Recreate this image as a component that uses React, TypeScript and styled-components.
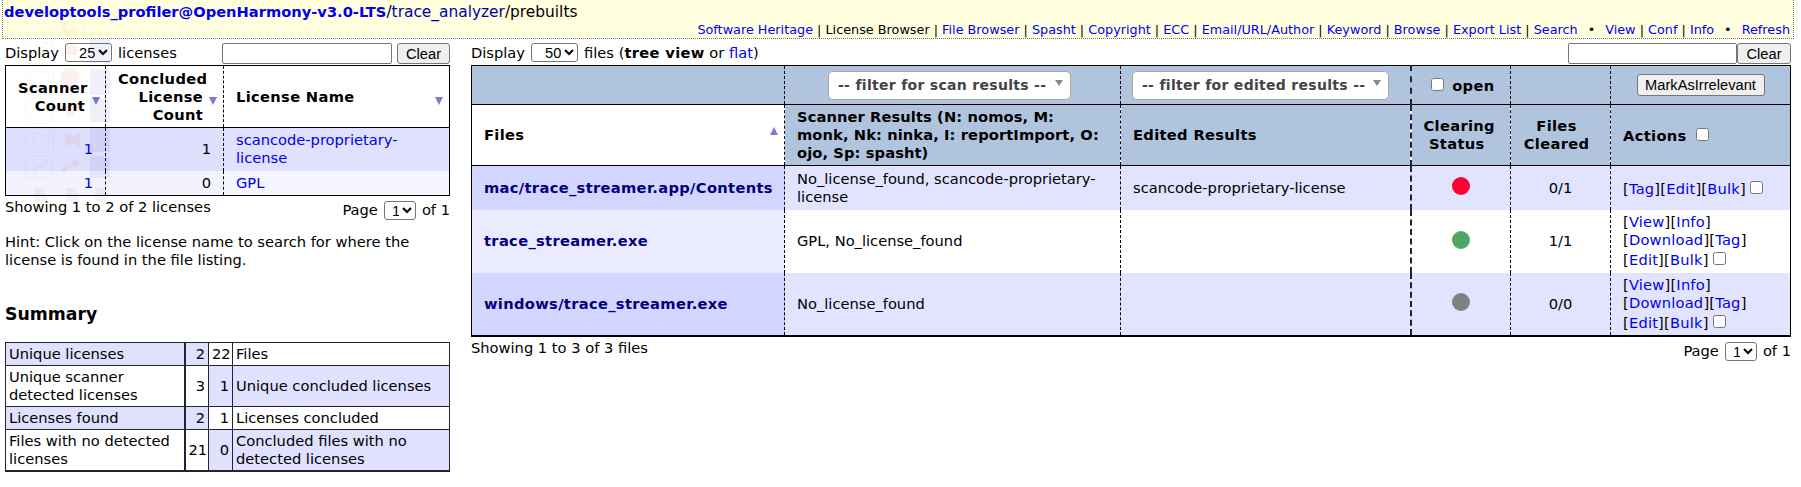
import React from 'react'
import styled, { createGlobalStyle } from 'styled-components'

const GlobalStyle = createGlobalStyle`
  html, body {
    margin: 0;
    padding: 0;
    background: #fff;
  }
  body {
    font-family: "DejaVu Sans", Verdana, sans-serif;
    font-size: 14.67px;
    line-height: 18px;
    color: #000;
    overflow: hidden;
  }
  a {
    color: #0000ee;
    text-decoration: none;
  }
  b {
    letter-spacing: 0.33px;
  }
`

const Page = styled.div`
  position: relative;
  width: 1801px;
  height: 487px;
  overflow: hidden;
`

const Header = styled.div`
  box-sizing: border-box;
  width: 1792px;
  height: 39px;
  margin-left: 2px;
  padding: 0 3px 0 1px;
  background: #ffffe0;
  border: dotted #777;
  border-width: 0 1px 1px 1px;
  display: flex;
  flex-direction: column;
  justify-content: flex-end;
  overflow: hidden;
`

const Breadcrumb = styled.div`
  font-size: 15.4px;
  line-height: 18px;
  margin-bottom: 1px;

  b {
    font-size: 14.67px;
    letter-spacing: 0;
  }
  span {
    color: #000;
  }
  a.plain {
    color: #0000aa;
  }
`

const Nav = styled.div`
  display: flex;
  justify-content: flex-end;
  align-items: center;
  height: 16px;
  font-size: 12.8px;
  line-height: 16px;
  white-space: pre;
`

const NavDot = styled.span`
  margin: 0 10px;
`

const Main = styled.div`
  display: flex;
  margin-top: 4px;
  padding-left: 5px;
`

const LeftColumn = styled.div`
  width: 445px;
  flex: none;
`

const RightColumn = styled.div`
  width: 1320px;
  flex: none;
  margin-left: 21px;
`

const ControlBar = styled.div`
  display: flex;
  justify-content: space-between;
  align-items: flex-start;
  height: 22px;
`

const DisplayLabel = styled.div`
  display: flex;
  align-items: center;
  height: 19px;
  gap: 6px;
`

const SearchGroup = styled.div<{ $gap: number }>`
  display: flex;
  gap: ${(p) => p.$gap}px;
`

const SearchInput = styled.input<{ $width: number }>`
  box-sizing: border-box;
  width: ${(p) => p.$width}px;
  height: 21px;
  border: 1px solid #767676;
  border-radius: 2px;
  background: #fff;
  padding: 1px 2px;
`

const Button = styled.button<{ $width: number; $height: number }>`
  box-sizing: border-box;
  width: ${(p) => p.$width}px;
  height: ${(p) => p.$height}px;
  padding: 0;
  background: #efefef;
  border: 1px solid #767676;
  border-radius: 3px;
  font-family: "Liberation Sans", Arial, sans-serif;
  font-size: 14.67px;
  color: #000;
`

const Select = styled.select<{ $width: number; $inset: number }>`
  box-sizing: border-box;
  width: ${(p) => p.$width}px;
  height: 19px;
  padding: 0 0 0 ${(p) => p.$inset}px;
  background: #fff;
  border: 1px solid #767676;
  border-radius: 3px;
  font-family: "Liberation Sans", Arial, sans-serif;
  font-size: 14.67px;
  color: #000;
`

const DataTable = styled.table<{ $heavyFoot?: boolean }>`
  border-collapse: collapse;
  table-layout: fixed;
  width: 100%;
  border: 1px solid #000;
  border-bottom-width: ${(p) => (p.$heavyFoot ? '2px' : '1px')};
`

const HeadCell = styled.th<{ $align?: string; $blue?: boolean; $thick?: boolean; $tight?: boolean }>`
  position: relative;
  box-sizing: border-box;
  padding: 3px ${(p) => (p.$tight ? '0' : '20px')} 3px 12px;
  text-align: ${(p) => p.$align || 'left'};
  vertical-align: middle;
  font-weight: bold;
  letter-spacing: ${(p) => (p.$tight ? '0.1px' : '0.33px')};
  white-space: ${(p) => (p.$tight ? 'nowrap' : 'normal')};
  background: ${(p) => (p.$blue ? '#b0c4de' : '#fff')};
  border-bottom: 1px solid #000;
  border-left: ${(p) => (p.$thick ? '2px dashed #223' : '1px dashed #000')};

  &:first-child {
    border-left: none;
  }
`

const FilterCell = styled.th<{ $thick?: boolean }>`
  box-sizing: border-box;
  padding: 0;
  height: 39px;
  text-align: center;
  vertical-align: middle;
  background: #b0c4de;
  border-bottom: 1px solid #000;
  border-left: ${(p) => (p.$thick ? '2px dashed #223' : '1px dashed #000')};

  &:first-child {
    border-left: none;
  }
`

const SortArrow = styled.span<{ $up?: boolean; $right: number; $top: number }>`
  position: absolute;
  right: ${(p) => p.$right}px;
  top: ${(p) => p.$top}px;
  width: 0;
  height: 0;
  border-left: 4.5px solid transparent;
  border-right: 4.5px solid transparent;
  ${(p) => (p.$up ? 'border-bottom: 8px solid #7b7bd0;' : 'border-top: 8px solid #7b7bd0;')}
`

const Row = styled.tr<{ $height: number }>`
  height: ${(p) => p.$height}px;
`

const Cell = styled.td<{ $bg?: string; $align?: string; $thick?: boolean }>`
  box-sizing: border-box;
  padding: 3px 12px;
  text-align: ${(p) => p.$align || 'left'};
  vertical-align: middle;
  background: ${(p) => p.$bg || '#fff'};
  border-left: ${(p) => (p.$thick ? '2px dashed #223' : '1px dashed #000')};

  &:first-child {
    border-left: none;
  }
`

const FileLink = styled.a`
  color: #000080;
  font-weight: bold;
  letter-spacing: 0.33px;
`

const Bubble = styled.span<{ $color: string }>`
  display: block;
  width: 18px;
  height: 18px;
  margin: -3px auto 0;
  border-radius: 50%;
  background: ${(p) => p.$color};
`

const Chosen = styled.div<{ $width: number; $left: number }>`
  box-sizing: border-box;
  display: flex;
  align-items: center;
  justify-content: space-between;
  width: ${(p) => p.$width}px;
  height: 29px;
  margin-left: ${(p) => p.$left}px;
  padding: 0 7px 0 9px;
  background: #fff;
  border: 1px solid #aaa;
  border-radius: 5px;
  color: #444;
  font-size: 14px;
  font-weight: bold;
  letter-spacing: 0.3px;
  white-space: nowrap;
`

const ChosenCaret = styled.span`
  width: 0;
  height: 0;
  margin-top: -4px;
  border-left: 4px solid transparent;
  border-right: 4px solid transparent;
  border-top: 6px solid #888;
`

const CheckBox = styled.input.attrs({ type: 'checkbox' })`
  width: 13px;
  height: 13px;
  margin: 3px 3px 3px 4px;
  vertical-align: baseline;
`

const ActionLine = styled.div`
  white-space: nowrap;
  letter-spacing: 0.2px;
`

const FootRow = styled.div`
  display: flex;
  justify-content: space-between;
  align-items: flex-start;
`

const ShowingText = styled.div`
  margin-top: 2px;
`

const Pager = styled.div`
  display: flex;
  align-items: center;
  gap: 6px;
  height: 19px;
  margin-top: 5px;
`

const Hint = styled.p`
  margin: 13px 0 0;
`

const SummaryTitle = styled.h3`
  margin: 35px 0 0;
  font-size: 17.3px;
  line-height: 20px;
  font-weight: bold;
`

const SummaryTable = styled.table`
  border-collapse: collapse;
  table-layout: fixed;
  width: 100%;
  margin-top: 18px;
  border: 1px solid #223;
  border-bottom-width: 2px;
`

const SummaryCell = styled.td<{ $shaded?: boolean; $num?: boolean; $heavy?: boolean }>`
  box-sizing: border-box;
  padding: 2px 3px;
  text-align: ${(p) => (p.$num ? 'right' : 'left')};
  background: ${(p) => (p.$shaded ? '#e0e0ff' : '#fff')};
  border: 1px solid #223;
  border-right-width: ${(p) => (p.$heavy ? '2px' : '1px')};
`

const Watermark = styled.svg`
  position: absolute;
  left: 15px;
  top: 0;
  pointer-events: none;
  opacity: 0.07;
`

const navItems = [
  'Software Heritage',
  'License Browser',
  'File Browser',
  'Spasht',
  'Copyright',
  'ECC',
  'Email/URL/Author',
  'Keyword',
  'Browse',
  'Export List',
  'Search',
]

const files = [
  {
    name: 'mac/trace_streamer.app/Contents',
    scanner: 'No_license_found, scancode-proprietary-license',
    edited: 'scancode-proprietary-license',
    status: '#ff0033',
    cleared: '0/1',
    sorted: '#d3d6ff',
    bg: '#e2e4ff',
    height: 44,
    actions: [['Tag', 'Edit', 'Bulk']],
  },
  {
    name: 'trace_streamer.exe',
    scanner: 'GPL, No_license_found',
    edited: '',
    status: '#4ba967',
    cleared: '1/1',
    sorted: '#eaebff',
    bg: '#fff',
    height: 63,
    actions: [['View', 'Info'], ['Download', 'Tag'], ['Edit', 'Bulk']],
  },
  {
    name: 'windows/trace_streamer.exe',
    scanner: 'No_license_found',
    edited: '',
    status: '#808080',
    cleared: '0/0',
    sorted: '#d3d6ff',
    bg: '#e2e4ff',
    height: 62,
    actions: [['View', 'Info'], ['Download', 'Tag'], ['Edit', 'Bulk']],
  },
]

const summary = [
  { a: 'Unique licenses', b: '2', c: '22', d: 'Files', firstShaded: true },
  { a: 'Unique scanner detected licenses', b: '3', c: '1', d: 'Unique concluded licenses', firstShaded: false },
  { a: 'Licenses found', b: '2', c: '1', d: 'Licenses concluded', firstShaded: true },
  { a: 'Files with no detected licenses', b: '21', c: '0', d: 'Concluded files with no detected licenses', firstShaded: false },
]

const App = () => {
  return (
    <Page>
      <GlobalStyle />
      <Header>
        <Breadcrumb>
          <b>
            <a href="#o">developtools_profiler@OpenHarmony-v3.0-LTS</a>
          </b>
          <span>/</span>
          <a className="plain" href="#t">
            trace_analyzer
          </a>
          <span>/prebuilts</span>
        </Breadcrumb>
        <Nav>
          {navItems.map((item, i) => (
            <React.Fragment key={item}>
              {i > 0 && <span> | </span>}
              {item === 'License Browser' ? <span>{item}</span> : <a href="#n">{item}</a>}
            </React.Fragment>
          ))}
          <NavDot>•</NavDot>
          <a href="#n">View</a>
          <span> | </span>
          <a href="#n">Conf</a>
          <span> | </span>
          <a href="#n">Info</a>
          <NavDot>•</NavDot>
          <a href="#n">Refresh</a>
        </Nav>
      </Header>

      <Main>
        <LeftColumn>
          <ControlBar>
            <DisplayLabel>
              Display
              <Select $width={47} $inset={9} defaultValue="25">
                <option>25</option>
              </Select>
              licenses
            </DisplayLabel>
            <SearchGroup $gap={5}>
              <SearchInput $width={170} />
              <Button $width={53} $height={21}>
                Clear
              </Button>
            </SearchGroup>
          </ControlBar>
          <DataTable>
            <colgroup>
              <col style={{ width: 100 }} />
              <col style={{ width: 118 }} />
              <col />
            </colgroup>
            <thead>
              <Row $height={62}>
                <HeadCell $align="right">
                  Scanner Count
                  <SortArrow $right={5} $top={31} />
                </HeadCell>
                <HeadCell $align="right">
                  Concluded License Count
                  <SortArrow $right={6} $top={31} />
                </HeadCell>
                <HeadCell>
                  License Name
                  <SortArrow $right={6} $top={31} />
                </HeadCell>
              </Row>
            </thead>
            <tbody>
              <Row $height={43}>
                <Cell $bg="#dedefd" $align="right">
                  <a href="#l">1</a>
                </Cell>
                <Cell $bg="#dedefd" $align="right">
                  1
                </Cell>
                <Cell $bg="#e0e0ff">
                  <a href="#l">scancode-proprietary-license</a>
                </Cell>
              </Row>
              <Row $height={24}>
                <Cell $bg="#f3f3ff" $align="right">
                  <a href="#l">1</a>
                </Cell>
                <Cell $bg="#f3f3ff" $align="right">
                  0
                </Cell>
                <Cell $bg="#f5f5ff">
                  <a href="#l">GPL</a>
                </Cell>
              </Row>
            </tbody>
          </DataTable>
          <FootRow>
            <ShowingText>Showing 1 to 2 of 2 licenses</ShowingText>
            <Pager>
              Page
              <Select $width={32} $inset={3} defaultValue="1">
                <option>1</option>
              </Select>
              of 1
            </Pager>
          </FootRow>
          <Hint>Hint: Click on the license name to search for where the license is found in the file listing.</Hint>
          <SummaryTitle>Summary</SummaryTitle>
          <SummaryTable>
            <colgroup>
              <col style={{ width: 179 }} />
              <col style={{ width: 24 }} />
              <col style={{ width: 24 }} />
              <col />
            </colgroup>
            <tbody>
              {summary.map((row) => (
                <tr key={row.a}>
                  <SummaryCell $shaded={row.firstShaded} $heavy>
                    {row.a}
                  </SummaryCell>
                  <SummaryCell $shaded={row.firstShaded} $num>
                    {row.b}
                  </SummaryCell>
                  <SummaryCell $shaded={!row.firstShaded} $num>
                    {row.c}
                  </SummaryCell>
                  <SummaryCell $shaded={!row.firstShaded}>{row.d}</SummaryCell>
                </tr>
              ))}
            </tbody>
          </SummaryTable>
        </LeftColumn>

        <RightColumn>
          <ControlBar>
            <DisplayLabel>
              Display
              <Select $width={47} $inset={9} defaultValue="50">
                <option>50</option>
              </Select>
              <span>
                files (<b>tree view</b> or <a href="#f">flat</a>)
              </span>
            </DisplayLabel>
            <SearchGroup $gap={0}>
              <SearchInput $width={169} />
              <Button $width={54} $height={21}>
                Clear
              </Button>
            </SearchGroup>
          </ControlBar>
          <DataTable $heavyFoot>
            <colgroup>
              <col style={{ width: 313 }} />
              <col style={{ width: 336 }} />
              <col style={{ width: 290 }} />
              <col style={{ width: 100 }} />
              <col style={{ width: 100 }} />
              <col />
            </colgroup>
            <thead>
              <tr>
                <FilterCell />
                <FilterCell>
                  <Chosen $width={243} $left={43}>
                    -- filter for scan results --
                    <ChosenCaret />
                  </Chosen>
                </FilterCell>
                <FilterCell>
                  <Chosen $width={257} $left={11}>
                    -- filter for edited results --
                    <ChosenCaret />
                  </Chosen>
                </FilterCell>
                <FilterCell $thick>
                  <CheckBox /> <b>open</b>
                </FilterCell>
                <FilterCell />
                <FilterCell>
                  <Button $width={128} $height={22}>
                    MarkAsIrrelevant
                  </Button>
                </FilterCell>
              </tr>
              <Row $height={61}>
                <HeadCell>
                  Files
                  <SortArrow $up $right={6} $top={22} />
                </HeadCell>
                <HeadCell $blue $tight>
                  Scanner Results (N: nomos, M:
                  <br />
                  monk, Nk: ninka, I: reportImport, O:
                  <br />
                  ojo, Sp: spasht)
                </HeadCell>
                <HeadCell $blue>Edited Results</HeadCell>
                <HeadCell $blue $thick $align="center">
                  Clearing Status
                </HeadCell>
                <HeadCell $blue $align="center">
                  Files Cleared
                </HeadCell>
                <HeadCell $blue>
                  Actions <CheckBox />
                </HeadCell>
              </Row>
            </thead>
            <tbody>
              {files.map((file) => (
                <Row key={file.name} $height={file.height}>
                  <Cell $bg={file.sorted}>
                    <FileLink href="#d">{file.name}</FileLink>
                  </Cell>
                  <Cell $bg={file.bg}>{file.scanner}</Cell>
                  <Cell $bg={file.bg}>{file.edited}</Cell>
                  <Cell $bg={file.bg} $thick>
                    <Bubble $color={file.status} />
                  </Cell>
                  <Cell $bg={file.bg} $align="center">
                    {file.cleared}
                  </Cell>
                  <Cell $bg={file.bg}>
                    {file.actions.map((line, i) => (
                      <ActionLine key={line[0]}>
                        {line.map((action) => (
                          <React.Fragment key={action}>
                            [<a href="#a">{action}</a>]
                          </React.Fragment>
                        ))}
                        {i === file.actions.length - 1 && <CheckBox />}
                      </ActionLine>
                    ))}
                  </Cell>
                </Row>
              ))}
            </tbody>
          </DataTable>
          <FootRow>
            <ShowingText>Showing 1 to 3 of 3 files</ShowingText>
            <Pager>
              Page
              <Select $width={32} $inset={3} defaultValue="1">
                <option>1</option>
              </Select>
              of 1
            </Pager>
          </FootRow>
        </RightColumn>
      </Main>

      {/* faint sprite of tool icons sitting over the top left of the page */}
      <Watermark width="108" height="215" viewBox="0 0 108 215">
        <g fill="none" stroke="#999">
          <rect x="11" y="14" width="27" height="20" />
          <rect x="42" y="14" width="27" height="20" />
          <rect x="75" y="14" width="20" height="20" />
          <path d="M18 24h13m-4-4 4 4-4 4" stroke="#888" />
          <path d="M49 31l6-14 6 14m-9-5h6" stroke="#888" />
          <rect x="11" y="42" width="27" height="22" />
          <rect x="11" y="72" width="27" height="22" />
          <circle cx="24" cy="78" r="10" />
          <rect x="11" y="98" width="27" height="22" />
          <rect x="11" y="128" width="27" height="24" />
          <path d="M19 132l8 4 8-4-2 16-7-5-7 5z" stroke="#4a8" />
          <rect x="11" y="156" width="27" height="22" />
          <path d="M19 174c0-12 14-4 12-14" stroke="#4a8" strokeWidth="2" />
        </g>
        <g fill="#e8492f">
          <rect x="50" y="45" width="12" height="10" />
          <path d="M46 17h5v12h9v5H46z" fill="#f07a2a" />
          <circle cx="55" cy="78" r="10" />
          <path d="M48 105h16l-6 12h-6z" />
          <path d="M50 132l8 4 8-4-2 16-7-5-7 5z" />
          <path d="M50 174c2-12 16-4 14-14l-6 0c0 8-10 4-12 12z" />
        </g>
        <g fill="#3a3ad0">
          <rect x="75" y="39" width="20" height="24" />
          <rect x="75" y="69" width="20" height="26" />
          <rect x="75" y="98" width="20" height="24" />
          <rect x="75" y="128" width="20" height="24" />
          <rect x="75" y="156" width="20" height="22" />
        </g>
        <g fill="#777">
          <path d="M20 188l9 0 5 14-14 0z" />
          <path d="M51 188l9 0 5 14-14 0z" />
          <path d="M80 188l9 0 5 14-14 0z" />
        </g>
      </Watermark>
    </Page>
  )
}

export default App
